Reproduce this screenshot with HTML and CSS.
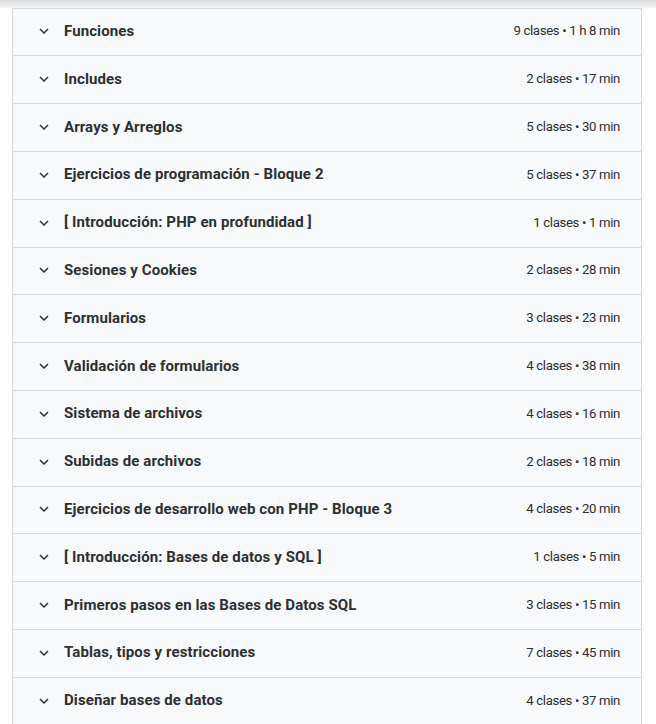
FILE: index.html
```html
<!DOCTYPE html>
<html lang="es">
<head>
<meta charset="utf-8">
<link rel="stylesheet" href="styles.css">
</head>
<body>
<div class="top-shade"></div>
<div class="curriculum">
  <div class="section"><span class="chev"><svg width="10" height="6" viewBox="0 0 10 6"><path d="M1 1l4 4 4-4" fill="none" stroke="#2d2f31" stroke-width="1.5"/></svg></span><span class="title">Funciones</span><span class="meta">9 clases • 1 h 8 min</span></div>
  <div class="section"><span class="chev"><svg width="10" height="6" viewBox="0 0 10 6"><path d="M1 1l4 4 4-4" fill="none" stroke="#2d2f31" stroke-width="1.5"/></svg></span><span class="title">Includes</span><span class="meta">2 clases • 17 min</span></div>
  <div class="section"><span class="chev"><svg width="10" height="6" viewBox="0 0 10 6"><path d="M1 1l4 4 4-4" fill="none" stroke="#2d2f31" stroke-width="1.5"/></svg></span><span class="title">Arrays y Arreglos</span><span class="meta">5 clases • 30 min</span></div>
  <div class="section"><span class="chev"><svg width="10" height="6" viewBox="0 0 10 6"><path d="M1 1l4 4 4-4" fill="none" stroke="#2d2f31" stroke-width="1.5"/></svg></span><span class="title">Ejercicios de programación - Bloque 2</span><span class="meta">5 clases • 37 min</span></div>
  <div class="section"><span class="chev"><svg width="10" height="6" viewBox="0 0 10 6"><path d="M1 1l4 4 4-4" fill="none" stroke="#2d2f31" stroke-width="1.5"/></svg></span><span class="title">[ Introducción: PHP en profundidad ]</span><span class="meta">1 clases • 1 min</span></div>
  <div class="section"><span class="chev"><svg width="10" height="6" viewBox="0 0 10 6"><path d="M1 1l4 4 4-4" fill="none" stroke="#2d2f31" stroke-width="1.5"/></svg></span><span class="title">Sesiones y Cookies</span><span class="meta">2 clases • 28 min</span></div>
  <div class="section"><span class="chev"><svg width="10" height="6" viewBox="0 0 10 6"><path d="M1 1l4 4 4-4" fill="none" stroke="#2d2f31" stroke-width="1.5"/></svg></span><span class="title">Formularios</span><span class="meta">3 clases • 23 min</span></div>
  <div class="section"><span class="chev"><svg width="10" height="6" viewBox="0 0 10 6"><path d="M1 1l4 4 4-4" fill="none" stroke="#2d2f31" stroke-width="1.5"/></svg></span><span class="title">Validación de formularios</span><span class="meta">4 clases • 38 min</span></div>
  <div class="section"><span class="chev"><svg width="10" height="6" viewBox="0 0 10 6"><path d="M1 1l4 4 4-4" fill="none" stroke="#2d2f31" stroke-width="1.5"/></svg></span><span class="title">Sistema de archivos</span><span class="meta">4 clases • 16 min</span></div>
  <div class="section"><span class="chev"><svg width="10" height="6" viewBox="0 0 10 6"><path d="M1 1l4 4 4-4" fill="none" stroke="#2d2f31" stroke-width="1.5"/></svg></span><span class="title">Subidas de archivos</span><span class="meta">2 clases • 18 min</span></div>
  <div class="section"><span class="chev"><svg width="10" height="6" viewBox="0 0 10 6"><path d="M1 1l4 4 4-4" fill="none" stroke="#2d2f31" stroke-width="1.5"/></svg></span><span class="title">Ejercicios de desarrollo web con PHP - Bloque 3</span><span class="meta">4 clases • 20 min</span></div>
  <div class="section"><span class="chev"><svg width="10" height="6" viewBox="0 0 10 6"><path d="M1 1l4 4 4-4" fill="none" stroke="#2d2f31" stroke-width="1.5"/></svg></span><span class="title">[ Introducción: Bases de datos y SQL ]</span><span class="meta">1 clases • 5 min</span></div>
  <div class="section"><span class="chev"><svg width="10" height="6" viewBox="0 0 10 6"><path d="M1 1l4 4 4-4" fill="none" stroke="#2d2f31" stroke-width="1.5"/></svg></span><span class="title">Primeros pasos en las Bases de Datos SQL</span><span class="meta">3 clases • 15 min</span></div>
  <div class="section"><span class="chev"><svg width="10" height="6" viewBox="0 0 10 6"><path d="M1 1l4 4 4-4" fill="none" stroke="#2d2f31" stroke-width="1.5"/></svg></span><span class="title">Tablas, tipos y restricciones</span><span class="meta">7 clases • 45 min</span></div>
  <div class="section"><span class="chev"><svg width="10" height="6" viewBox="0 0 10 6"><path d="M1 1l4 4 4-4" fill="none" stroke="#2d2f31" stroke-width="1.5"/></svg></span><span class="title">Diseñar bases de datos</span><span class="meta">4 clases • 37 min</span></div>
</div>
</body>
</html>
```
FILE: styles.css
```css
html, body {
  margin: 0;
  padding: 0;
  background: #ffffff;
  overflow: hidden;
}
body {
  font-family: Roboto, "Liberation Sans", sans-serif;
  color: #2d2f31;
  height: 724px;
  position: relative;
}
.top-shade {
  position: absolute;
  left: 0;
  top: 0;
  width: 656px;
  height: 8px;
  background: linear-gradient(to bottom, #d9dadb 0%, #f3f4f4 100%);
  z-index: 1;
}
.curriculum {
  margin-left: 12px;
  width: 630px;
  padding-top: 7.6px;
  box-sizing: border-box;
  border-left: 1px solid #d1d7dc;
  border-right: 1px solid #d1d7dc;
}
.section {
  display: flex;
  align-items: center;
  height: 47.8px;
  box-sizing: border-box;
  border-top: 1px solid #d1d7dc;
  background: #f7f9fa;
  padding: 0 21px 2px 26px;
}
.chev {
  display: flex;
  width: 10px;
  height: 6px;
  margin-right: 15px;
  margin-top: 1px;
}
.chev svg { display: block; }
.title {
  flex: 1;
  font-size: 15px;
  font-weight: 700;
  letter-spacing: 0.1px;
}
.meta {
  font-size: 13.2px;
  font-weight: 400;
  letter-spacing: -0.35px;
}
```
